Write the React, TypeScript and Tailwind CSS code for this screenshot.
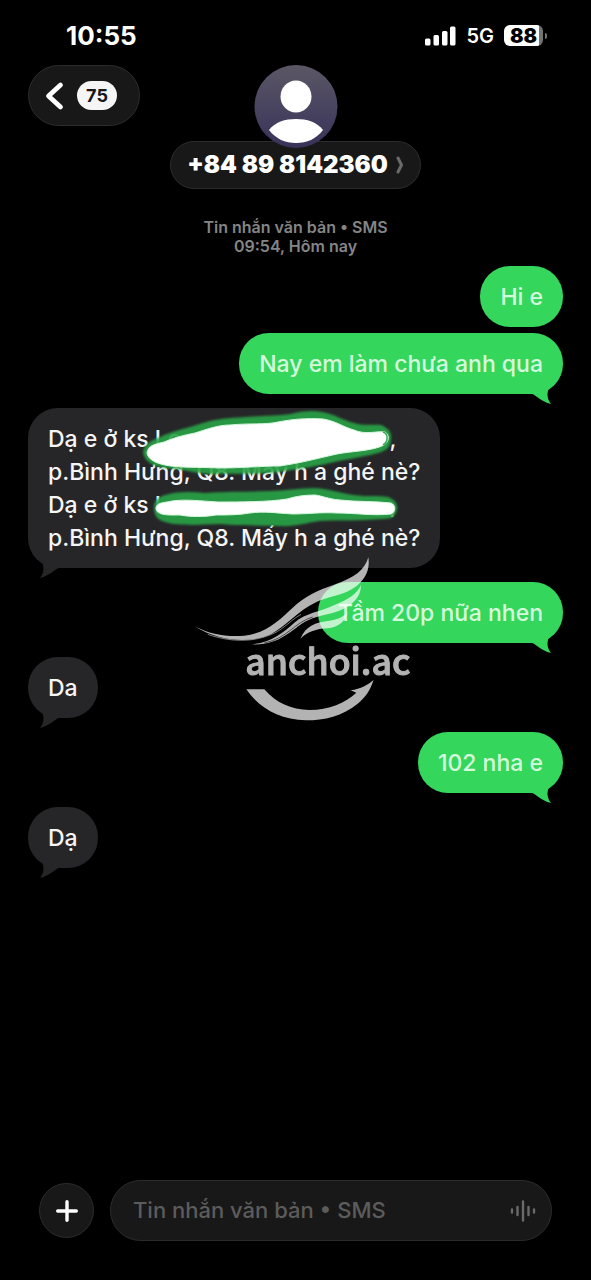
import { clsx } from 'clsx';
import type { ReactNode } from 'react';

type Message = { id: number; mine: boolean; tail: boolean; body: ReactNode };

const messages: Message[] = [
    { id: 1, mine: true, tail: false, body: 'Hi e' },
    { id: 2, mine: true, tail: true, body: 'Nay em làm chưa anh qua' },
    { id: 3, mine: false, tail: true, body: <AddressMessage /> },
    { id: 4, mine: true, tail: true, body: 'Tầm 20p nữa nhen' },
    { id: 5, mine: false, tail: true, body: 'Da' },
    { id: 6, mine: true, tail: true, body: '102 nha e' },
    { id: 7, mine: false, tail: true, body: 'Dạ' },
];

function StatusBar() {
    return (
        <div className="flex h-[65px] items-center justify-between pt-1.5 pr-11 pl-[66px]">
            <time className="text-[26px] font-bold">10:55</time>
            <div className="flex items-center gap-2.5">
                <svg
                    viewBox="0 0 31 20"
                    className="h-5 w-[31px] fill-white"
                >
                    <rect x="0" y="12.5" width="5.5" height="7" rx="1.5" />
                    <rect x="8.5" y="9" width="5.5" height="10.5" rx="1.5" />
                    <rect x="17" y="5" width="5.5" height="14.5" rx="1.5" />
                    <rect x="25" y="0.5" width="5.5" height="19" rx="1.5" />
                </svg>
                <span className="text-xl font-semibold">5G</span>
                <div className="flex items-center gap-0.5">
                    <div className="flex h-[21px] w-[39px] items-center justify-center rounded-md bg-linear-to-r from-white from-90% to-neutral-500 to-90% text-xl font-black text-black">88</div>
                    <span className="h-1.5 w-0.5 rounded-r-full bg-neutral-500" />
                </div>
            </div>
        </div>
    );
}

function Header() {
    return (
        <header className="grid grid-cols-[1fr_auto_1fr] items-start px-7">
            <button
                type="button"
                aria-label="Back"
                className="flex h-[61px] w-28 items-center gap-3 rounded-full border border-[#2c2c2c] bg-[#181818] pl-4"
            >
                <svg
                    viewBox="0 0 20 30"
                    className="h-[30px] w-5 fill-none stroke-white"
                    strokeWidth="4.8"
                    strokeLinecap="round"
                    strokeLinejoin="round"
                >
                    <path d="M15.5 4 L3.5 15 L15.5 26" />
                </svg>
                <span className="flex h-[29px] w-10 items-center justify-center rounded-full bg-neutral-100 text-lg font-bold text-[#181818]">75</span>
            </button>
            <div className="flex flex-col items-center">
                <svg
                    viewBox="0 0 84 84"
                    className="relative z-10 size-[84px]"
                >
                    <defs>
                        <linearGradient
                            id="avatar"
                            x1="0"
                            y1="0"
                            x2="0"
                            y2="1"
                        >
                            <stop stopColor="#5b5765" />
                            <stop
                                offset="1"
                                stopColor="#38325a"
                            />
                        </linearGradient>
                    </defs>
                    <circle cx="42" cy="41.5" r="41.5" fill="url(#avatar)" />
                    <ellipse cx="42" cy="31.5" rx="15.5" ry="16" fill="white" />
                    <path d="M15 65 C21 57 31 54 42 54 C53 54 63 57 69 65 C62 74 53 78 42 78 C31 78 22 74 15 65Z" fill="white" />
                </svg>
                <button
                    type="button"
                    className="-mt-2 flex h-12 items-center gap-2 rounded-full border border-[#2c2c2c] bg-[#181818] px-4 text-2xl font-black"
                >
                    +84 89 8142360
                    <svg
                        viewBox="0 0 8 18"
                        className="h-[18px] w-2 fill-none stroke-[#6a6a6a]"
                        strokeWidth="3"
                        strokeLinecap="round"
                        strokeLinejoin="round"
                    >
                        <path d="M2 2 L5.5 9 L2 16" />
                    </svg>
                </button>
            </div>
        </header>
    );
}

function AddressMessage() {
    return (
        <>
            <p className="flex pr-6">
                <span className="flex-1">Dạ e ở ks Lo</span>,
            </p>
            <p>p.Bình Hưng, Q8. Mấy h a ghé nè?</p>
            <p className="flex pr-6">
                <span className="flex-1">Dạ e ở ks L</span>,
            </p>
            <p>p.Bình Hưng, Q8. Mấy h a ghé nè?</p>
            <svg
                viewBox="28 407 407 161"
                className="absolute top-0 left-0 h-[161px] w-[407px]"
            >
                <defs>
                    <filter id="soft">
                        <feGaussianBlur stdDeviation="1" />
                    </filter>
                </defs>
                <g
                    fill="#27a347"
                    fillOpacity="0.9"
                    filter="url(#soft)"
                >
                    <path d="M143 451 C145 443 150 440 158 437 C168 432 178 429 190 426 C205 421 215 418 230 417 C255 415 275 415 290 413 C302 410 313 409 322 411 C335 413 342 419 354 422 C364 425 373 423 381 424 C388 427 392 431 391 438 C391 446 386 450 378 452 C360 457 345 458 330 462 C310 467 295 468 280 471 C255 474 240 472 220 473 C200 474 188 469 175 468 C162 467 145 465 143 451Z" />
                    <path d="M154 507 C154 500 158 496 165 494 C180 490 192 491 205 492 C230 490 250 491 270 490 C285 490 298 487 315 487 C330 488 340 492 354 494 C367 496 378 494 388 496 C395 499 398 503 397 508 C396 515 392 518 384 518 C360 520 340 519 320 520 C305 522 295 526 280 525 C260 524 240 525 220 523 C200 524 178 525 165 521 C157 519 154 514 154 507Z" />
                </g>
                <g
                    fill="white"
                    stroke="#d4f8dd"
                    strokeWidth="1"
                >
                    <path d="M147 452 C148 444 156 443 164 441 C176 436 185 434 195 432 C208 428 218 424 230 424 C250 422 265 424 278 421 C293 418 307 417 323 418 C336 420 343 426 354 429 C365 434 376 430 385 431 C390 434 389 441 384 444 C373 450 352 450 337 453 C315 458 300 462 280 465 C262 465 240 467 220 467 C198 466 178 467 165 464 C155 462 148 458 147 452Z" />
                    <path d="M156 507 C157 501 164 502 172 500 C185 498 202 500 218 501 C240 501 268 501 287 498 C297 495 305 494 315 494 C323 495 328 498 340 499 C358 501 375 500 391 502 C396 504 396 511 391 513 C373 515 355 512 337 512 C320 511 308 513 293 513 C275 512 265 510 250 512 C238 514 228 514 216 514 C205 516 190 516 180 514 C170 514 156 515 156 507Z" />
                </g>
                <path
                    d="M383 431 C389 433 388 441 383 444"
                    fill="none"
                    stroke="#3bab59"
                    strokeWidth="1.5"
                />
            </svg>
        </>
    );
}

function Bubble({ message }: { message: Message }) {
    return (
        <div
            className={clsx(
                'relative max-w-[80%] rounded-[30px] px-5 pt-[15px] pb-[13px] text-[23px] leading-[33px] font-medium whitespace-nowrap',
                message.mine ? 'self-end bg-[#34d65c] text-[#d6fbdc]' : 'self-start bg-[#262628] text-neutral-100',
                message.tail ? 'mb-3.5' : 'mb-1.5',
            )}
        >
            {message.body}
            {message.tail && (
                <svg
                    viewBox="0 0 32 24"
                    className={clsx('absolute -bottom-2.5 h-6 w-8', message.mine ? 'right-1 fill-[#34d65c]' : 'left-1 -scale-x-100 fill-[#262628]')}
                >
                    <path d="M2 13 C9 14 14 22 24 24 C21 20 19 15 22 8 L25 4 L18 0 L4 0Z" />
                </svg>
            )}
        </div>
    );
}

function Watermark() {
    return (
        <svg
            viewBox="-30 0 750 570"
            className="pointer-events-none absolute top-[356px] left-1/2 h-[190px] w-[250px] -translate-x-1/2 fill-white opacity-70"
        >
            <path d="M40 243 C90 270 140 276 190 272 C260 264 300 220 335 188 C370 155 410 136 465 117 C520 98 552 75 562 37 C568 75 552 108 512 133 C480 152 440 155 405 172 C350 198 320 240 270 268 C215 294 120 294 40 243Z" />
            <path
                d="M80 268 C160 296 235 290 290 259 C320 240 335 222 360 208"
                className="fill-none stroke-white"
                strokeWidth="2"
            />
            <path d="M212 298 C270 293 305 264 340 233 C375 203 420 200 460 180 C500 164 528 148 540 120 C540 160 510 183 475 197 C440 210 405 211 372 230 C330 255 295 302 212 298Z" />
            <path
                d="M250 294 C320 280 340 232 395 216"
                fill="none"
                stroke="#222"
                strokeWidth="2"
            />
            <path d="M358 281 C375 241 405 233 440 228 C468 224 488 216 500 200 C494 231 470 246 440 250 C405 252 382 259 358 281Z" />
            <text
                x="193"
                y="389"
                className="stroke-white stroke-3 font-['Noto_Sans_CJK_JP',sans-serif] text-[107px] font-medium"
            >
                anchoi.ac
            </text>
            <path d="M196 433 L250 433 C285 474 330 494 385 495 C445 494 492 474 526 443 L509 436 C540 432 560 420 578 405 C566 440 552 458 530 476 C485 513 430 526 375 526 C295 523 235 489 196 433Z" />
        </svg>
    );
}

function Composer() {
    return (
        <form className="mt-auto flex items-center gap-4 px-[39px] pb-[39px]">
            <button
                type="button"
                aria-label="Add attachment"
                className="flex size-[55px] shrink-0 items-center justify-center rounded-full border border-[#2c2c2c] bg-[#181818]"
            >
                <svg
                    viewBox="0 0 22 22"
                    className="size-[22px] stroke-white"
                    strokeWidth="3.4"
                    strokeLinecap="round"
                >
                    <path d="M11 1.7 V20.3 M1.7 11 H20.3" />
                </svg>
            </button>
            <div className="flex h-[61px] min-w-0 flex-1 items-center rounded-full border border-[#2c2c2c] bg-[#181818] pr-3.5 pl-[22px]">
                <input
                    type="text"
                    aria-label="Tin nhắn văn bản"
                    placeholder="Tin nhắn văn bản • SMS"
                    className="min-w-0 flex-1 bg-transparent text-[22px] font-medium outline-none placeholder:text-[#5c5c5c]"
                />
                <button
                    type="button"
                    aria-label="Record audio"
                >
                    <svg
                        viewBox="0 0 28 24"
                        className="h-6 w-7 stroke-[#6a6a6a]"
                        strokeWidth="2.4"
                        strokeLinecap="round"
                    >
                        <path d="M3 10.5 V13.5 M8.5 8 V16 M14 2.5 V21.5 M19.5 8 V16 M25 10.5 V13.5" />
                    </svg>
                </button>
            </div>
        </form>
    );
}

export default function App() {
    return (
        <div className="flex min-h-screen flex-col bg-black font-['Inter',sans-serif] text-white">
            <StatusBar />
            <Header />
            <main className="relative flex flex-col px-7 pt-[29px]">
                <div className="mb-2.5 text-center text-base leading-[19px] font-semibold text-[#858585]">
                    <p>Tin nhắn văn bản • SMS</p>
                    <p>09:54, Hôm nay</p>
                </div>
                {messages.map((message) => (
                    <Bubble
                        key={message.id}
                        message={message}
                    />
                ))}
                <Watermark />
            </main>
            <Composer />
        </div>
    );
}
